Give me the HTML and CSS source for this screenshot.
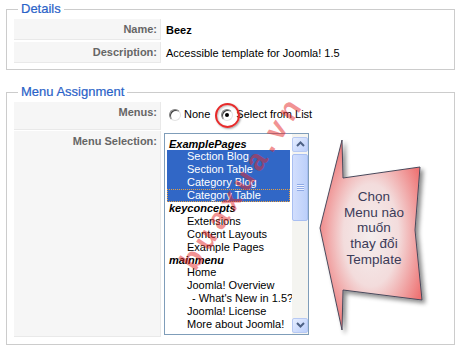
FILE: index.html
```html
<!DOCTYPE html>
<html lang="vi">
<head>
    <meta charset="UTF-8">
    <title>Template: Beez</title>
    <link rel="stylesheet" href="styles.css">
</head>
<body>
    <fieldset class="box">
        <legend>Details</legend>
        <table class="admintable details">
            <tr>
                <td class="key">Name:</td>
                <td class="val"><strong>Beez</strong></td>
            </tr>
            <tr>
                <td class="key">Description:</td>
                <td class="val">Accessible template for Joomla! 1.5</td>
            </tr>
        </table>
    </fieldset>

    <fieldset class="box assign">
        <legend>Menu Assignment</legend>
        <table class="admintable menus">
            <tr>
                <td class="key">Menus:</td>
                <td class="radios">
                    <label class="opt"><span class="radio"></span>None</label>
                    <label class="opt"><span class="radio checked"></span>Select from List</label>
                </td>
            </tr>
            <tr>
                <td class="key">Menu Selection:</td>
                <td class="select-cell">
                    <div class="listbox">
                        <ul class="options">
                            <li class="group">ExamplePages</li>
                            <li class="item sel">Section Blog</li>
                            <li class="item sel">Section Table</li>
                            <li class="item sel">Category Blog</li>
                            <li class="item sel focus">Category Table</li>
                            <li class="group">keyconcepts</li>
                            <li class="item">Extensions</li>
                            <li class="item">Content Layouts</li>
                            <li class="item">Example Pages</li>
                            <li class="group">mainmenu</li>
                            <li class="item">Home</li>
                            <li class="item">Joomla! Overview</li>
                            <li class="item sub">- What's New in 1.5?</li>
                            <li class="item">Joomla! License</li>
                            <li class="item">More about Joomla!</li>
                        </ul>
                        <div class="scrollbar">
                            <div class="sb-btn">
                                <svg width="9" height="6" viewBox="0 0 9 6"><polyline points="1,5 4.5,1.5 8,5" fill="none" stroke="#4d6185" stroke-width="2"/></svg>
                            </div>
                            <div class="sb-thumb"><span class="grip"></span></div>
                            <div class="sb-track"></div>
                            <div class="sb-btn">
                                <svg width="9" height="6" viewBox="0 0 9 6"><polyline points="1,1 4.5,4.5 8,1" fill="none" stroke="#4d6185" stroke-width="2"/></svg>
                            </div>
                        </div>
                    </div>
                </td>
            </tr>
        </table>
    </fieldset>

    <!-- hình minh hoạ chèn lên ảnh chụp -->
    <div class="watermark">buaxua.vn</div>

    <div class="callout">
        <svg width="130" height="212" viewBox="0 0 130 212">
            <defs>
                <radialGradient id="pinkfill" cx="0.5" cy="0.5" r="0.6">
                    <stop offset="0" stop-color="#f4eeee"/>
                    <stop offset="0.45" stop-color="#f3dcdc"/>
                    <stop offset="1" stop-color="#ee6a6a"/>
                </radialGradient>
                <filter id="shadow" x="-20%" y="-20%" width="150%" height="150%">
                    <feDropShadow dx="3" dy="3" stdDeviation="2" flood-color="#000" flood-opacity="0.45"/>
                </filter>
            </defs>
            <polygon points="10,98 32,10 33,48 110,37 105,100 112,170 33,160 32,200"
                     fill="url(#pinkfill)" stroke="#4a4a5c" stroke-width="1" filter="url(#shadow)"/>
        </svg>
        <div class="callout-text">Chọn<br>Menu nào<br>muốn<br>thay đổi<br>Template</div>
    </div>
</body>
</html>
```

FILE: styles.css
```css
body {
    margin: 0;
    padding: 1px 8px 0 6px;
    font-family: "Liberation Sans", Arial, sans-serif;
    font-size: 11px;
    color: #000;
    background-color: #fff;
}

fieldset.box {
    margin: 0;
    border: 1px solid #ccc;
    padding: 0 6px 4px 6px;
}

fieldset.assign {
    margin-top: 14px;
    padding-bottom: 6px;
}

legend {
    margin-left: 5px;
    padding: 0 3px;
    font-size: 13px;
    line-height: 16px;
    color: #2a62c8;
    -webkit-text-stroke: 0.2px #2a62c8;
}

table.admintable {
    width: 100%;
    border-collapse: separate;
}

table.details {
    border-spacing: 1px 2px;
}

table.menus {
    border-spacing: 1px;
    margin-top: 1px;
}

td.key {
    width: 139px;
    padding: 3px 3px 0 4px;
    line-height: 14px;
    text-align: right;
    vertical-align: top;
    font-weight: bold;
    color: #666;
    background-color: #f6f6f6;
    border-bottom: 1px solid #e9e9e9;
    border-right: 1px solid #e9e9e9;
}

table.details td.key {
    padding: 3px 3px 3px 4px;
    vertical-align: middle;
}

td.val {
    padding: 3px 4px;
    line-height: 14px;
}

td.radios {
    padding: 4px 3px 4px 7px;
    line-height: 17px;
    vertical-align: middle;
}

.opt {
    display: inline-flex;
    align-items: center;
    margin-right: 8px;
    font-size: 11px;
}

.radio {
    position: relative;
    box-sizing: border-box;
    width: 12px;
    height: 12px;
    margin-right: 3px;
    border-radius: 50%;
    border: 1px solid;
    border-color: #808080 #e4e4e4 #e4e4e4 #808080;
    box-shadow: inset 1px 1px 0 #404040;
    background-color: #fff;
}

.radio.checked::before {
    content: "";
    position: absolute;
    left: 3px;
    top: 3px;
    width: 4px;
    height: 4px;
    border-radius: 50%;
    background-color: #000;
}

/* vòng đỏ đánh dấu */
.radio.checked::after {
    content: "";
    position: absolute;
    left: -7px;
    top: -7px;
    width: 21px;
    height: 21px;
    border: 2px solid #e62a2a;
    border-radius: 50%;
    box-shadow: 1px 1px 2px rgba(0, 0, 0, 0.35), inset 1px 1px 2px rgba(0, 0, 0, 0.25);
}

td.select-cell {
    padding: 2px 2px;
    vertical-align: top;
}

.listbox {
    display: flex;
    width: 143px;
    height: 200px;
    border: 1px solid #7f9db9;
    background-color: #fff;
}

.options {
    flex: 1;
    margin: 0;
    padding: 4px 2px 0 2px;
    list-style: none;
    overflow: hidden;
    white-space: nowrap;
}

.options li {
    box-sizing: border-box;
    height: 12.9px;
    line-height: 12.9px;
}

.options .group {
    padding-left: 2px;
    font-weight: bold;
    font-style: italic;
}

.options .item {
    padding-left: 20px;
}

.options .sub {
    padding-left: 25px;
}

.options .sel {
    color: #fff;
    background-color: #3167c6;
}

.options .focus {
    outline: 1px dotted #e8a040;
    outline-offset: -1px;
}

.scrollbar {
    display: flex;
    flex-direction: column;
    width: 16px;
    padding: 3px 0 1px 0;
    box-sizing: border-box;
    background-color: #f4f4f0;
}

.sb-btn {
    height: 15px;
    display: flex;
    align-items: center;
    justify-content: center;
    box-sizing: border-box;
    border: 1px solid #b7c9f3;
    border-radius: 2px;
    background: linear-gradient(135deg, #e6eeff, #bccffb);
}

.sb-thumb {
    height: 67px;
    margin-top: 2px;
    display: flex;
    align-items: center;
    justify-content: center;
    box-sizing: border-box;
    border: 1px solid #a9bff2;
    border-radius: 2px;
    background: linear-gradient(to right, #d2defd, #bcd0fa);
}

.grip {
    width: 7px;
    height: 7px;
    background: repeating-linear-gradient(#8ea9e6 0, #8ea9e6 1px, #eef3ff 1px, #eef3ff 2px);
}

.sb-track {
    flex: 1;
}

.watermark {
    position: absolute;
    left: 242px;
    top: 182px;
    transform: translate(-50%, -50%) rotate(-57deg);
    font-size: 30px;
    font-weight: bold;
    letter-spacing: 6px;
    color: rgba(228, 40, 40, 0.5);
    white-space: nowrap;
    pointer-events: none;
}

.callout {
    position: absolute;
    left: 310px;
    top: 130px;
    width: 130px;
    height: 212px;
}

.callout svg {
    display: block;
}

.callout-text {
    position: absolute;
    left: 32px;
    top: 59px;
    width: 64px;
    text-align: center;
    font-size: 13.5px;
    line-height: 15.7px;
    color: #3b3b58;
}
```
